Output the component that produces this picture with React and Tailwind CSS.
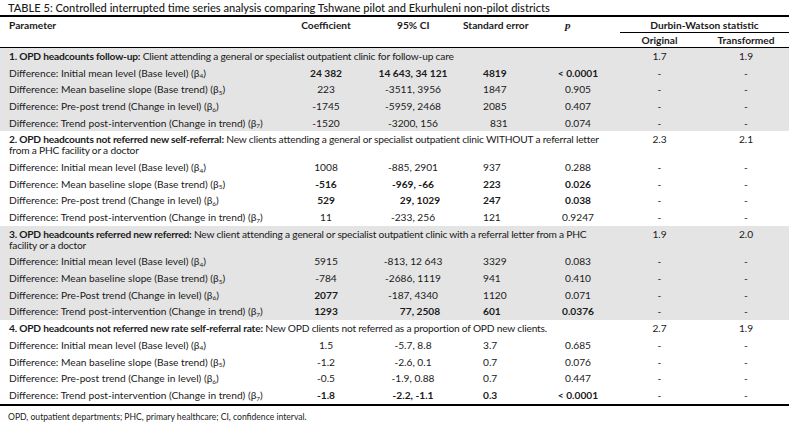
import React from "react";

const GRID = "grid grid-cols-[290px_72px_94px_84px_76px_87px_86px]";

const sections = [
  {
    bold: "1. OPD headcounts follow-up:",
    rest: [" Client attending a general or specialist outpatient clinic for follow-up care"],
    orig: "1.7",
    trans: "1.9",
    gray: true,
    rows: [
      { label: "Initial mean level (Base level)", sub: "4", c: "24 382", ci: "14 643, 34 121", se: "4819", p: "< 0.0001", b: [1, 1, 1, 1] },
      { label: "Mean baseline slope (Base trend)", sub: "5", c: "223", ci: "-3511, 3956", se: "1847", p: "0.905", b: [0, 0, 0, 0] },
      { label: "Pre-post trend (Change in level)", sub: "6", c: "-1745", ci: "-5959, 2468", se: "2085", p: "0.407", b: [0, 0, 0, 0] },
      { label: "Trend post-intervention (Change in trend)", sub: "7", c: "-1520", ci: "-3200, 156", se: "831", p: "0.074", b: [0, 0, 0, 0], sePad: true },
    ],
  },
  {
    bold: "2. OPD headcounts not referred new self-referral:",
    rest: [" New clients attending a general or specialist outpatient clinic WITHOUT a referral letter", "from a PHC facility or a doctor"],
    orig: "2.3",
    trans: "2.1",
    gray: false,
    rows: [
      { label: "Initial mean level (Base level)", sub: "4", c: "1008", ci: "-885, 2901", se: "937", p: "0.288", b: [0, 0, 0, 0] },
      { label: "Mean baseline slope (Base trend)", sub: "5", c: "-516", ci: "-969, -66", se: "223", p: "0.026", b: [1, 1, 1, 1] },
      { label: "Pre-post trend (Change in level)", sub: "6", c: "529", ci: "29, 1029", se: "247", p: "0.038", b: [1, 1, 1, 1], ciPad: true },
      { label: "Trend post-intervention (Change in trend)", sub: "7", c: "11", ci: "-233, 256", se: "121", p: "0.9247", b: [0, 0, 0, 0] },
    ],
  },
  {
    bold: "3. OPD headcounts referred new referred:",
    rest: [" New client attending a general or specialist outpatient clinic with a referral letter from a PHC", "facility or a doctor"],
    orig: "1.9",
    trans: "2.0",
    gray: true,
    rows: [
      { label: "Initial mean level (Base level)", sub: "4", c: "5915", ci: "-813, 12 643", se: "3329", p: "0.083", b: [0, 0, 0, 0] },
      { label: "Mean baseline slope (Base trend)", sub: "5", c: "-784", ci: "-2686, 1119", se: "941", p: "0.410", b: [0, 0, 0, 0] },
      { label: "Pre-Post trend (Change in level)", sub: "6", c: "2077", ci: "-187, 4340", se: "1120", p: "0.071", b: [1, 0, 0, 0] },
      { label: "Trend post-intervention (Change in trend)", sub: "7", c: "1293", ci: "77, 2508", se: "601", p: "0.0376", b: [1, 1, 1, 1], ciPad: true },
    ],
  },
  {
    bold: "4. OPD headcounts not referred new rate self-referral rate:",
    rest: [" New OPD clients not referred as a proportion of OPD new clients."],
    orig: "2.7",
    trans: "1.9",
    gray: false,
    rows: [
      { label: "Initial mean level (Base level)", sub: "4", c: "1.5", ci: "-5.7, 8.8", se: "3.7", p: "0.685", b: [0, 0, 0, 0] },
      { label: "Mean baseline slope (Base trend)", sub: "5", c: "-1.2", ci: "-2.6, 0.1", se: "0.7", p: "0.076", b: [0, 0, 0, 0] },
      { label: "Pre-post trend (Change in level)", sub: "6", c: "-0.5", ci: "-1.9, 0.88", se: "0.7", p: "0.447", b: [0, 0, 0, 0] },
      { label: "Trend post-intervention (Change in trend)", sub: "7", c: "-1.8", ci: "-2.2, -1.1", se: "0.3", p: "< 0.0001", b: [1, 1, 1, 1] },
    ],
  },
];

function DataRow({ r }) {
  return (
    <div className={`${GRID} h-[16.7px] items-center`}>
      <div className="pl-[9px] whitespace-nowrap">
        Difference: {r.label} (β<sub className="text-[6.5px]">{r.sub}</sub>)
      </div>
      <div className={`text-center ${r.b[0] ? "font-bold" : ""}`}>{r.c}</div>
      <div className={`text-center whitespace-nowrap ${r.ciPad ? "pl-[22px]" : "pl-[8px]"} ${r.b[1] ? "font-bold" : ""}`}>{r.ci}</div>
      <div className={`${r.sePad ? "pl-[34px]" : "pl-[27px]"} ${r.b[2] ? "font-bold" : ""}`}>{r.se}</div>
      <div className={`text-center whitespace-nowrap ${r.b[3] ? "font-bold" : ""}`}>{r.p}</div>
      <div className="text-center">-</div>
      <div className="text-center">-</div>
    </div>
  );
}

function Section({ s }) {
  const twoLine = s.rest.length > 1;
  return (
    <div className={s.gray ? "bg-[#e4e4e4]" : "bg-white"}>
      <div className={`${GRID} ${twoLine ? "h-[27.7px]" : "h-[16.7px]"} items-start`}>
        <div className="col-span-5 pl-[9px] whitespace-nowrap pt-[3px] tracking-[-0.2px]">
          <span className="font-bold">{s.bold}</span>
          {s.rest[0]}
          {twoLine && (
            <>
              <br />
              {s.rest[1]}
            </>
          )}
        </div>
        <div className="text-center pt-[3px]">{s.orig}</div>
        <div className="text-center pt-[3px]">{s.trans}</div>
      </div>
      {s.rows.map((r, i) => (
        <DataRow key={i} r={r} />
      ))}
    </div>
  );
}

export default function App() {
  return (
    <div
      className="w-[793px] h-[429px] bg-white text-[#1a1a1a] text-[10.2px] leading-[11px] overflow-hidden"
      style={{ fontFamily: "Lato, 'Liberation Sans', sans-serif" }}
    >
      <div className="w-[789px]">
        <div className="h-[15px] pl-[8px] pt-[2px] text-[11.1px] leading-[12px] font-medium whitespace-nowrap">
          TABLE 5: Controlled interrupted time series analysis comparing Tshwane pilot and Ekurhuleni non-pilot districts
        </div>
        <div className="h-[2px] bg-black" />
        <div className={`${GRID} h-[16px] items-center font-bold`}>
          <div className="pl-[9px]">Parameter</div>
          <div className="text-center">Coefficient</div>
          <div className="pl-[35px]">95% CI</div>
          <div className="pl-[7px] whitespace-nowrap">Standard error</div>
          <div className="pl-[25px] italic text-[11px]" style={{ fontFamily: "'Liberation Serif', serif" }}>
            p
          </div>
          <div className="col-span-2 ml-[4px] h-full flex items-center justify-center border-b border-black pt-[1px]">
            Durbin-Watson statistic
          </div>
        </div>
        <div className={`${GRID} h-[15px] items-center font-bold border-b border-black`}>
          <div />
          <div />
          <div />
          <div />
          <div />
          <div className="text-center">Original</div>
          <div className="text-center">Transformed</div>
        </div>
        {sections.map((s, i) => (
          <Section key={i} s={s} />
        ))}
        <div className="h-[2px] bg-black" />
        <div className="pl-[8px] pt-[6px] text-[8.6px] leading-[10px] whitespace-nowrap">
          OPD, outpatient departments; PHC, primary healthcare; CI, confidence interval.
        </div>
      </div>
    </div>
  );
}
